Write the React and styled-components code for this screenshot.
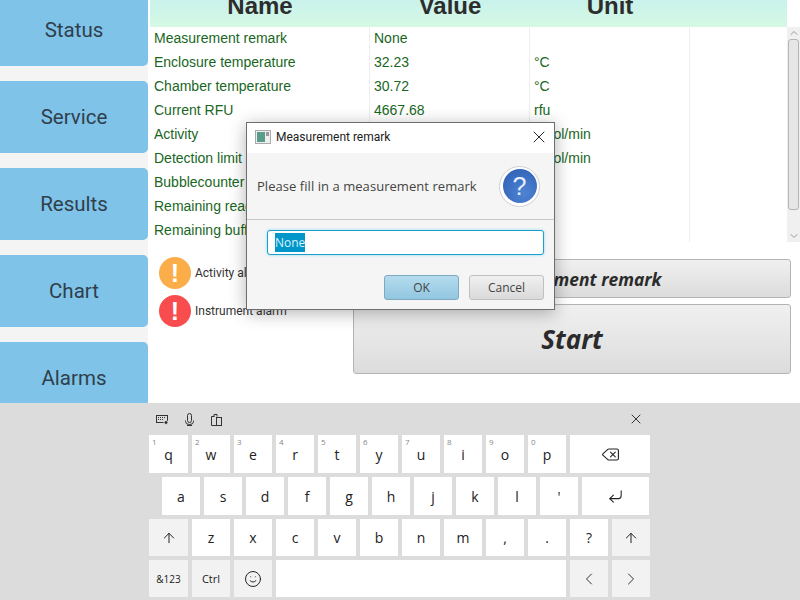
import React from 'react';
import styled, { createGlobalStyle } from 'styled-components';
import { ArrowUp, ChevronLeft, ChevronRight, ChevronUp, ChevronDown, CornerDownLeft, Delete, Smile, X } from 'lucide-react';

const GlobalStyle = createGlobalStyle`
  html, body { margin: 0; padding: 0; background: #fff; }
  #root { width: 800px; height: 600px; overflow: hidden; }
`;

const Page = styled.div`
  position: relative;
  width: 800px;
  height: 600px;
  overflow: hidden;
  display: flex;
  flex-direction: column;
`;

const Top = styled.div`
  height: 403px;
  flex: none;
  display: flex;
  overflow: hidden;
`;

const Sidebar = styled.div`
  width: 148px;
  flex: none;
  margin: -6px 2px 0 0;
  background: #f4f4f4;
  display: flex;
  flex-direction: column;
  gap: 15px;
`;

const NavButton = styled.div`
  height: 72px;
  flex: none;
  box-sizing: border-box;
  border-radius: 0 5px 5px 0;
  background: #7fc3e8;
  color: #2f3f4c;
  font: 20.5px Roboto, sans-serif;
  display: flex;
  align-items: center;
  justify-content: center;
`;

const Main = styled.div`
  flex: 1;
  display: flex;
  flex-direction: column;
  min-width: 0;
`;

const TableHead = styled.div`
  height: 27px;
  width: 637px;
  flex: none;
  overflow: hidden;
  background: linear-gradient(#c9f2ec, #d6f9e4);
  display: grid;
  grid-template-columns: 220px 160px 160px 97px;
`;

const HeadCell = styled.div`
  font: bold 24px/12px "Liberation Sans", sans-serif;
  color: #2d2d2d;
  text-align: center;
`;

const TableWrap = styled.div`
  height: 215px;
  flex: none;
  display: flex;
`;

const TableBody = styled.div`
  width: 637px;
  flex: none;
  display: grid;
  grid-template-columns: 220px 160px 160px 97px;
  grid-auto-rows: 24px;
  align-content: start;
  margin-top: -1px;
  background:
    linear-gradient(#eee, #eee) 219px 0 / 1px 100% no-repeat,
    linear-gradient(#eee, #eee) 379px 0 / 1px 100% no-repeat,
    linear-gradient(#eee, #eee) 539px 0 / 1px 100% no-repeat;
`;

const Cell = styled.div`
  font: 14px/24px "Liberation Sans", sans-serif;
  color: #19661e;
  padding-left: 4px;
  white-space: nowrap;
  overflow: hidden;
`;

const Scrollbar = styled.div`
  width: 13px;
  flex: none;
  background: #f0f0f0;
  display: flex;
  flex-direction: column;
  align-items: center;
  justify-content: space-between;
  color: #9a9a9a;
`;

const Thumb = styled.div`
  flex: 1;
  width: 11px;
  box-sizing: border-box;
  margin-bottom: 20px;
  border: 1px solid #b4b4b4;
  border-radius: 3px;
  background: #e6e6e6;
`;

const Lower = styled.div`
  display: flex;
  padding-top: 14px;
`;

const Alarms = styled.div`
  width: 203px;
  flex: none;
  padding: 1px 0 0 9px;
  box-sizing: border-box;
  display: flex;
  flex-direction: column;
  gap: 6px;
`;

const AlarmRow = styled.div`
  display: flex;
  align-items: center;
  gap: 4px;
  font: 12px Roboto, sans-serif;
  color: #333;
`;

const AlarmDot = styled.div`
  width: 32px;
  height: 32px;
  border-radius: 50%;
  background: ${(p) => p.$color};
  color: #fff;
  display: flex;
  align-items: center;
  justify-content: center;
  font: bold 25px "Liberation Sans", sans-serif;
`;

const Actions = styled.div`
  width: 438px;
  flex: none;
  padding-top: 3px;
  display: flex;
  flex-direction: column;
  gap: 6px;
`;

const ActionButton = styled.div`
  height: ${(p) => p.$height}px;
  box-sizing: border-box;
  border: 1px solid #b4b4b4;
  border-radius: 3px;
  background: linear-gradient(#f0f0f0, #dcdcdc);
  color: #2b2b2b;
  font: italic bold ${(p) => p.$size}px "Open Sans", sans-serif;
  display: flex;
  align-items: center;
  justify-content: center;
`;

const Dialog = styled.div`
  position: absolute;
  left: 246px;
  top: 122px;
  width: 309px;
  height: 188px;
  box-sizing: border-box;
  border: 1px solid #6e6e6e;
  background: #f5f5f5;
  box-shadow: 0 3px 16px rgba(0, 0, 0, 0.3);
  display: flex;
  flex-direction: column;
`;

const TitleBar = styled.div`
  height: 30px;
  flex: none;
  box-sizing: border-box;
  background: #fff;
  display: flex;
  align-items: center;
  padding: 0 5px 2px 8px;
  gap: 5px;
  font: 12px Roboto, sans-serif;
  color: #1c1c1c;
`;

const TitleText = styled.span`
  flex: 1;
`;

const Header = styled.div`
  height: 67px;
  flex: none;
  box-sizing: border-box;
  border-bottom: 1px solid #c8c8c8;
  display: flex;
  align-items: center;
  justify-content: space-between;
  padding: 0 14px 0 10px;
  font: 13px "Open Sans", sans-serif;
  letter-spacing: 0.05px;
  color: #444;
`;

const Ring = styled.div`
  width: 41px;
  height: 41px;
  box-sizing: border-box;
  border: 1px solid #cfcfcf;
  border-radius: 50%;
  background: #fff;
  display: flex;
  align-items: center;
  justify-content: center;
`;

const Question = styled.div`
  width: 34px;
  height: 34px;
  border-radius: 50%;
  background: radial-gradient(circle at 60% 70%, #4f84d4, #2a5cb0);
  color: #e8f0ff;
  display: flex;
  align-items: center;
  justify-content: center;
  font: 25px "Liberation Sans", sans-serif;
`;

const InputRow = styled.div`
  padding: 10px 10px 0 20px;
`;

const Field = styled.div`
  height: 25px;
  box-sizing: border-box;
  border: 1px solid #1a9fd0;
  border-radius: 3px;
  box-shadow: 0 0 3px #8fd8f0;
  background: #fff;
  padding-left: 7px;
  display: flex;
  align-items: center;
  font: 12px "Open Sans", sans-serif;
`;

const Selected = styled.span`
  background: #0096c9;
  color: #d9f2fb;
  line-height: 19px;
`;

const DialogButtons = styled.div`
  display: flex;
  justify-content: flex-end;
  gap: 10px;
  padding: 20px 10px 0 0;
`;

const DialogButton = styled.div`
  width: 75px;
  height: 25px;
  box-sizing: border-box;
  border: 1px solid ${(p) => (p.$primary ? '#7fa9bf' : '#c0c0c0')};
  border-radius: 3px;
  background: ${(p) => (p.$primary ? 'linear-gradient(#b4dcee, #92c6e0)' : 'linear-gradient(#f0f0f0, #dadada)')};
  color: #444;
  font: 12px "Open Sans", sans-serif;
  display: flex;
  align-items: center;
  justify-content: center;
`;

const KeyboardPanel = styled.div`
  flex: 1;
  background: #dcdcdc;
  display: flex;
  flex-direction: column;
  padding-left: 149px;
`;

const KeyToolbar = styled.div`
  height: 32px;
  width: 501px;
  flex: none;
  display: flex;
  align-items: center;
  gap: 14px;
  padding: 0 6px 0 7px;
  box-sizing: border-box;
  color: #333;
`;

const ToolbarSpacer = styled.div`
  flex: 1;
`;

const KeyRow = styled.div`
  display: flex;
  gap: 4px;
  height: ${(p) => p.$height || 38}px;
  margin: 0 0 4px ${(p) => p.$indent || 0}px;
`;

const Key = styled.div`
  position: relative;
  width: ${(p) => p.$width || 38}px;
  flex: none;
  background: ${(p) => (p.$gray ? '#f2f2f2' : '#fff')};
  color: #222;
  font: ${(p) => p.$size || 14}px "Open Sans", sans-serif;
  display: flex;
  align-items: center;
  justify-content: center;
`;

const KeyHint = styled.span`
  position: absolute;
  left: 3px;
  top: 1px;
  font: 8px "Open Sans", sans-serif;
  color: #888;
`;

const rows = [
  ['Measurement remark', 'None', ''],
  ['Enclosure temperature', '32.23', '°C'],
  ['Chamber temperature', '30.72', '°C'],
  ['Current RFU', '4667.68', 'rfu'],
  ['Activity', '', 'nmol/min'],
  ['Detection limit', '', 'nmol/min'],
  ['Bubblecounter', '', ''],
  ['Remaining reagent', '', ''],
  ['Remaining buffer', '', ''],
];

const navItems = ['Status', 'Service', 'Results', 'Chart', 'Alarms'];
const row1 = 'qwertyuiop'.split('');
const row2 = ['a', 's', 'd', 'f', 'g', 'h', 'j', 'k', 'l', "'"];
const row3 = ['z', 'x', 'c', 'v', 'b', 'n', 'm', ',', '.', '?'];

function WindowIcon() {
  return (
    <svg width="16" height="14" viewBox="0 0 16 14">
      <rect x="0.5" y="0.5" width="15" height="13" fill="#eee" stroke="#aaa" />
      <rect x="2" y="2" width="8" height="10" fill="#5a9c8c" />
      <rect x="11" y="2" width="3" height="4" fill="#999" />
    </svg>
  );
}

function KeyboardSettingsIcon() {
  return (
    <svg width="13" height="13" viewBox="0 0 13 13" fill="none" stroke="currentColor">
      <rect x="0.5" y="2.5" width="11" height="7" />
      <path d="M2 4.5h1M4 4.5h1M6 4.5h1M8 4.5h1M2 6.5h1M4 6.5h1M6 6.5h1" />
      <circle cx="10" cy="9.5" r="2" fill="currentColor" stroke="#dcdcdc" />
    </svg>
  );
}

function MicIcon() {
  return (
    <svg width="13" height="13" viewBox="0 0 13 13" fill="none" stroke="currentColor">
      <rect x="4.5" y="0.5" width="4" height="9" rx="2" />
      <path d="M2.5 7.5v1a4 3 0 0 0 8 0v-1" />
      <path d="M4 12.5h5" strokeWidth="1.4" />
    </svg>
  );
}

function ClipboardIcon() {
  return (
    <svg width="13" height="13" viewBox="0 0 13 13" fill="none" stroke="currentColor">
      <path d="M1.5 12.5v-9h3M4 3.5V1.5h3v2" />
      <rect x="6.5" y="4.5" width="5" height="8" />
      <path d="M1.5 12.5h5" />
    </svg>
  );
}

export default function App() {
  return (
    <Page>
      <GlobalStyle />
      <Top>
        <Sidebar>
          {navItems.map((item) => (
            <NavButton key={item}>{item}</NavButton>
          ))}
        </Sidebar>
        <Main>
          <TableHead>
            <HeadCell>Name</HeadCell>
            <HeadCell>Value</HeadCell>
            <HeadCell>Unit</HeadCell>
            <HeadCell />
          </TableHead>
          <TableWrap>
            <TableBody>
              {rows.map((row) => (
                <React.Fragment key={row[0]}>
                  <Cell>{row[0]}</Cell>
                  <Cell>{row[1]}</Cell>
                  <Cell>{row[2]}</Cell>
                  <Cell />
                </React.Fragment>
              ))}
            </TableBody>
            <Scrollbar>
              <ChevronUp size={12} />
              <Thumb />
              <ChevronDown size={12} />
            </Scrollbar>
          </TableWrap>
          <Lower>
            <Alarms>
              <AlarmRow>
                <AlarmDot $color="#fbad4a">!</AlarmDot>
                Activity alarm
              </AlarmRow>
              <AlarmRow>
                <AlarmDot $color="#f94c4f">!</AlarmDot>
                Instrument alarm
              </AlarmRow>
            </Alarms>
            <Actions>
              <ActionButton $height={39} $size={17.4}>Measurement remark</ActionButton>
              <ActionButton $height={70} $size={26}>Start</ActionButton>
            </Actions>
          </Lower>
        </Main>
      </Top>

      <KeyboardPanel>
        <KeyToolbar>
          <KeyboardSettingsIcon />
          <MicIcon />
          <ClipboardIcon />
          <ToolbarSpacer />
          <X size={16} strokeWidth={1.5} />
        </KeyToolbar>
        <KeyRow>
          {row1.map((k, i) => (
            <Key key={k} $width={i === 0 ? 39 : 38}>
              <KeyHint>{(i + 1) % 10}</KeyHint>
              {k}
            </Key>
          ))}
          <Key $width={80}><Delete size={19} strokeWidth={1.4} /></Key>
        </KeyRow>
        <KeyRow $indent={13}>
          {row2.map((k) => (
            <Key key={k}>{k}</Key>
          ))}
          <Key $width={67}><CornerDownLeft size={17} strokeWidth={1.5} /></Key>
        </KeyRow>
        <KeyRow $height={37}>
          <Key $gray $width={39}><ArrowUp size={16} strokeWidth={1.5} /></Key>
          {row3.map((k) => (
            <Key key={k}>{k}</Key>
          ))}
          <Key $gray><ArrowUp size={16} strokeWidth={1.5} /></Key>
        </KeyRow>
        <KeyRow $height={37}>
          <Key $gray $width={39} $size={10}>&amp;123</Key>
          <Key $gray $size={11}>Ctrl</Key>
          <Key $gray><Smile size={18} strokeWidth={1.3} /></Key>
          <Key $width={290} />
          <Key $gray><ChevronLeft size={20} strokeWidth={1.2} color="#333" /></Key>
          <Key $gray><ChevronRight size={20} strokeWidth={1.2} color="#333" /></Key>
        </KeyRow>
      </KeyboardPanel>

      <Dialog>
        <TitleBar>
          <WindowIcon />
          <TitleText>Measurement remark</TitleText>
          <X size={20} strokeWidth={1.1} color="#111" />
        </TitleBar>
        <Header>
          Please fill in a measurement remark
          <Ring><Question>?</Question></Ring>
        </Header>
        <InputRow>
          <Field><Selected>None</Selected></Field>
        </InputRow>
        <DialogButtons>
          <DialogButton $primary>OK</DialogButton>
          <DialogButton>Cancel</DialogButton>
        </DialogButtons>
      </Dialog>
    </Page>
  );
}
